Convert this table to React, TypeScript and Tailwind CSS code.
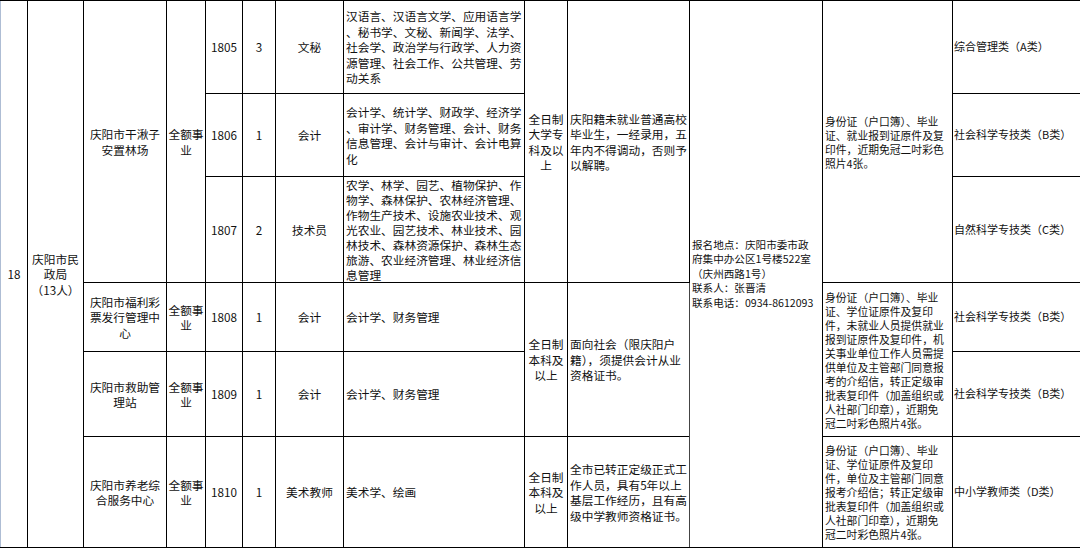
import React from "react";

const L = (lines: string[]) =>
  lines.map((l, i) => (
    <div key={i} className="whitespace-nowrap">
      {l}
    </div>
  ));

const td = "border border-black p-0 align-middle overflow-hidden";
const center = `${td} text-center`;
const left = `${td} text-left`;
const doc = `${left} pl-[2px] text-[10.8px] leading-[14px]`;
const cat = `${left} pl-[1px] text-[11px]`;

export default function App() {
  return (
    <div
      className="w-[1080px] h-[548px] bg-white overflow-hidden text-[#111] text-[11.7px] leading-[15.5px]"
      style={{ fontFamily: '"Noto Sans CJK SC", "Noto Sans", sans-serif' }}
    >
      <table className="table-fixed border-collapse w-[1080px]">
        <colgroup>
          <col className="w-[27px]" />
          <col className="w-[56px]" />
          <col className="w-[83px]" />
          <col className="w-[39px]" />
          <col className="w-[37px]" />
          <col className="w-[33px]" />
          <col className="w-[68px]" />
          <col className="w-[181px]" />
          <col className="w-[43px]" />
          <col className="w-[122px]" />
          <col className="w-[133px]" />
          <col className="w-[130px]" />
          <col className="w-[128px]" />
        </colgroup>
        <tbody>
          <tr className="h-[93px]">
            <td rowSpan={6} className={`${center} border-l-[#aebdd4]`}>
              18
            </td>
            <td rowSpan={6} className={center}>
              {L(["庆阳市民", "政局", "（13人）"])}
            </td>
            <td rowSpan={3} className={center}>
              {L(["庆阳市干湫子", "安置林场"])}
            </td>
            <td rowSpan={3} className={center}>
              {L(["全额事", "业"])}
            </td>
            <td className={`${center} border-l-[#666]`}>1805</td>
            <td className={`${center} border-l-[#555]`}>3</td>
            <td className={center}>文秘</td>
            <td className={`${left} pl-[2px]`}>
              {L([
                "汉语言、汉语言文学、应用语言学",
                "、秘书学、文秘、新闻学、法学、",
                "社会学、政治学与行政学、人力资",
                "源管理、社会工作、公共管理、劳",
                "动关系",
              ])}
            </td>
            <td rowSpan={3} className={center}>
              {L(["全日制", "大学专", "科及以", "上"])}
            </td>
            <td rowSpan={3} className={`${left} pl-[2px] border-l-[#444]`}>
              {L([
                "庆阳籍未就业普通高校",
                "毕业生，一经录用，五",
                "年内不得调动，否则予",
                "以解聘。",
              ])}
            </td>
            <td
              rowSpan={6}
              className={`${left} pl-[2px] border-l-[#444] text-[10.6px] leading-[14.5px]`}
            >
              {L([
                "报名地点：庆阳市委市政",
                "府集中办公区1号楼522室",
                "（庆州西路1号）",
                "联系人：张晋清",
                "联系电话：0934-8612093",
              ])}
            </td>
            <td rowSpan={3} className={doc}>
              {L([
                "身份证（户口簿）、毕业",
                "证、就业报到证原件及复",
                "印件，近期免冠二吋彩色",
                "照片4张。",
              ])}
            </td>
            <td className={cat}>综合管理类（A类）</td>
          </tr>
          <tr className="h-[83px]">
            <td className={`${center} border-l-[#666]`}>1806</td>
            <td className={`${center} border-l-[#555]`}>1</td>
            <td className={center}>会计</td>
            <td className={`${left} pl-[2px]`}>
              {L([
                "会计学、统计学、财政学、经济学",
                "、审计学、财务管理、会计、财务",
                "信息管理、会计与审计、会计电算",
                "化",
              ])}
            </td>
            <td className={cat}>社会科学专技类（B类）</td>
          </tr>
          <tr className="h-[106px]">
            <td className={`${center} border-l-[#666]`}>1807</td>
            <td className={`${center} border-l-[#555]`}>2</td>
            <td className={center}>技术员</td>
            <td className={`${left} pl-[2px] leading-[15px]`}>
              <div className="h-[105px] overflow-hidden">
                {L([
                  "农学、林学、园艺、植物保护、作",
                  "物学、森林保护、农林经济管理、",
                  "作物生产技术、设施农业技术、观",
                  "光农业、园艺技术、林业技术、园",
                  "林技术、森林资源保护、森林生态",
                  "旅游、农业经济管理、林业经济信",
                  "息管理",
                ])}
              </div>
            </td>
            <td className={cat}>自然科学专技类（C类）</td>
          </tr>
          <tr className="h-[69px]">
            <td className={center}>
              {L(["庆阳市福利彩", "票发行管理中", "心"])}
            </td>
            <td className={center}>{L(["全额事", "业"])}</td>
            <td className={`${center} border-l-[#666]`}>1808</td>
            <td className={`${center} border-l-[#555]`}>1</td>
            <td className={center}>会计</td>
            <td className={`${left} pl-[2px]`}>会计学、财务管理</td>
            <td rowSpan={2} className={center}>
              {L(["全日制", "本科及", "以上"])}
            </td>
            <td rowSpan={2} className={`${left} pl-[2px] border-l-[#444]`}>
              {L([
                "面向社会（限庆阳户",
                "籍），须提供会计从业",
                "资格证书。",
              ])}
            </td>
            <td rowSpan={2} className={doc}>
              {L([
                "身份证（户口簿）、毕业",
                "证、学位证原件及复印",
                "件，未就业人员提供就业",
                "报到证原件及复印件，机",
                "关事业单位工作人员需提",
                "供单位及主管部门同意报",
                "考的介绍信，转正定级审",
                "批表复印件（加盖组织或",
                "人社部门印章），近期免",
                "冠二吋彩色照片4张。",
              ])}
            </td>
            <td className={cat}>社会科学专技类（B类）</td>
          </tr>
          <tr className="h-[85px]">
            <td className={center}>{L(["庆阳市救助管", "理站"])}</td>
            <td className={center}>{L(["全额事", "业"])}</td>
            <td className={`${center} border-l-[#666]`}>1809</td>
            <td className={`${center} border-l-[#555]`}>1</td>
            <td className={center}>会计</td>
            <td className={`${left} pl-[2px]`}>会计学、财务管理</td>
            <td className={cat}>社会科学专技类（B类）</td>
          </tr>
          <tr className="h-[111px]">
            <td className={center}>{L(["庆阳市养老综", "合服务中心"])}</td>
            <td className={center}>{L(["全额事", "业"])}</td>
            <td className={`${center} border-l-[#666]`}>1810</td>
            <td className={`${center} border-l-[#555]`}>1</td>
            <td className={center}>美术教师</td>
            <td className={`${left} pl-[2px]`}>美术学、绘画</td>
            <td className={center}>{L(["全日制", "本科及", "以上"])}</td>
            <td className={`${left} pl-[2px] border-l-[#444]`}>
              {L([
                "全市已转正定级正式工",
                "作人员，具有5年以上",
                "基层工作经历，且有高",
                "级中学教师资格证书。",
              ])}
            </td>
            <td className={doc}>
              {L([
                "身份证（户口簿）、毕业",
                "证、学位证原件及复印",
                "件，单位及主管部门同意",
                "报考介绍信；转正定级审",
                "批表复印件（加盖组织或",
                "人社部门印章），近期免",
                "冠二吋彩色照片4张。",
              ])}
            </td>
            <td className={cat}>中小学教师类（D类）</td>
          </tr>
        </tbody>
      </table>
    </div>
  );
}
